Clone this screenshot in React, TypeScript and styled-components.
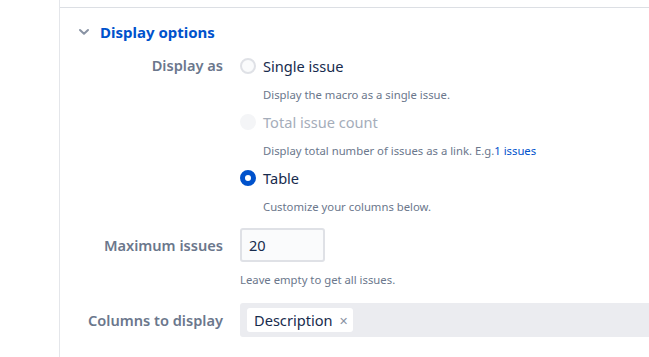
import React, { ReactElement } from 'react'
import styled, { createGlobalStyle } from 'styled-components'

const GlobalStyle = createGlobalStyle`
    html, body {
        margin: 0;
        padding: 0;
        background: #ffffff;
    }
    body {
        font-family: 'Noto Sans', 'Open Sans', sans-serif;
        color: #172b4d;
    }
`

const Page = styled.div`
    display: flex;
    height: 357px;
    overflow: hidden;
`

const Gutter = styled.div`
    width: 59px;
    flex: none;
`

const Panel = styled.div`
    flex: 1;
    border-left: 1px solid #e4e6ea;
    padding-top: 7px;
`

const Separator = styled.div`
    height: 1px;
    background: #dcdfe4;
`

const SectionHeader = styled.div`
    display: flex;
    align-items: center;
    height: 24px;
    margin-top: 12px;
    padding-left: 18px;
    gap: 10px;
`

const SectionTitle = styled.span`
    font-size: 15px;
    font-weight: 700;
    color: #0052cc;
    line-height: 24px;
`

const Form = styled.div`
    display: grid;
    grid-template-columns: 163px 1fr;
    column-gap: 17px;
    margin-top: 10px;
`

const Label = styled.div<{ $height: number }>`
    text-align: right;
    font-size: 14.6px;
    font-weight: 600;
    color: #6b778c;
    line-height: ${(p) => p.$height}px;
`

const Field = styled.div<{ $gap?: number }>`
    min-width: 0;
    margin-bottom: ${(p) => p.$gap ?? 0}px;
`

const Option = styled.div`
    margin-bottom: 7px;
`

const OptionRow = styled.div`
    display: flex;
    align-items: center;
    gap: 7px;
    height: 24px;
`

const Radio = styled.span<{ $checked?: boolean; $disabled?: boolean }>`
    box-sizing: border-box;
    width: 16px;
    height: 16px;
    border-radius: 50%;
    flex: none;
    background: ${(p) => (p.$checked ? '#ffffff' : p.$disabled ? '#f4f5f7' : '#fafbfc')};
    border: ${(p) =>
        p.$checked ? '5px solid #0052cc' : p.$disabled ? '2px solid #f4f5f7' : '2px solid #dfe1e6'};
`

const OptionText = styled.span<{ $disabled?: boolean }>`
    font-size: 14.6px;
    color: ${(p) => (p.$disabled ? '#a5adba' : '#172b4d')};
`

const Help = styled.div`
    font-size: 11.3px;
    line-height: 16px;
    color: #6b778c;
    padding-left: 23px;
    margin-top: 9px;
`

const FieldHelp = styled(Help)`
    padding-left: 0;
    margin-top: 10px;
`

const HelpLink = styled.a`
    color: #0052cc;
    text-decoration: none;
`

const TextInput = styled.div`
    box-sizing: border-box;
    width: 85px;
    height: 34px;
    margin-top: 6px;
    border: 2px solid #dfe1e6;
    border-radius: 3px;
    background: #fafbfc;
    padding-left: 7px;
    font-size: 14.6px;
    line-height: 30px;
    color: #172b4d;
`

const MultiSelect = styled.div`
    box-sizing: border-box;
    height: 34px;
    background: #ebecf0;
    border-radius: 3px 0 0 3px;
    display: flex;
    align-items: center;
    padding-left: 7px;
`

const Tag = styled.span`
    display: inline-flex;
    align-items: center;
    height: 24px;
    background: #ffffff;
    border-radius: 3px;
    padding: 0 5px 0 7px;
    gap: 6px;
    font-size: 14.6px;
    color: #172b4d;
`

const TagRemove = styled.span`
    font-size: 11px;
    color: #8993a4;
`

const Chevron = (): ReactElement => (
    <svg width="12" height="8" viewBox="0 0 12 8">
        <path d="M2 2 L6 5.8 L10 2" fill="none" stroke="#8993a4" strokeWidth="2" strokeLinecap="round" strokeLinejoin="round" />
    </svg>
)

export default function App(): ReactElement {
    return (
        <Page>
            <GlobalStyle />
            <Gutter />
            <Panel>
                <Separator />
                <SectionHeader>
                    <Chevron />
                    <SectionTitle>Display options</SectionTitle>
                </SectionHeader>
                <Form>
                    <Label $height={22}>Display as</Label>
                    <Field>
                        <Option>
                            <OptionRow>
                                <Radio />
                                <OptionText>Single issue</OptionText>
                            </OptionRow>
                            <Help>Display the macro as a single issue.</Help>
                        </Option>
                        <Option>
                            <OptionRow>
                                <Radio $disabled />
                                <OptionText $disabled>Total issue count</OptionText>
                            </OptionRow>
                            <Help>
                                Display total number of issues as a link. E.g.<HelpLink>1 issues</HelpLink>
                            </Help>
                        </Option>
                        <Option>
                            <OptionRow>
                                <Radio $checked />
                                <OptionText>Table</OptionText>
                            </OptionRow>
                            <Help>Customize your columns below.</Help>
                        </Option>
                    </Field>
                    <Label $height={46}>Maximum issues</Label>
                    <Field $gap={15}>
                        <TextInput>20</TextInput>
                        <FieldHelp>Leave empty to get all issues.</FieldHelp>
                    </Field>
                    <Label $height={34}>Columns to display</Label>
                    <Field>
                        <MultiSelect>
                            <Tag>
                                Description
                                <TagRemove>✕</TagRemove>
                            </Tag>
                        </MultiSelect>
                    </Field>
                </Form>
            </Panel>
        </Page>
    )
}
